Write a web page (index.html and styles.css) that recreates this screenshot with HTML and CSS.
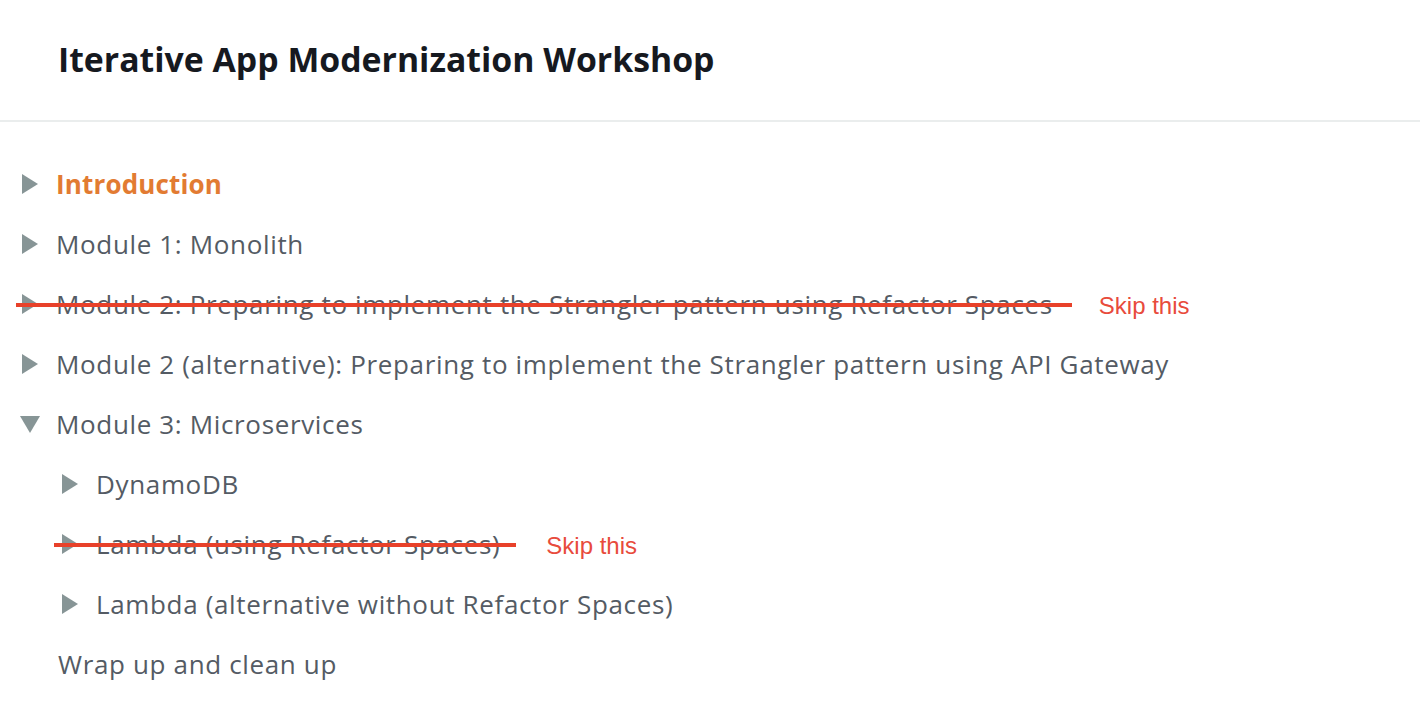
FILE: index.html
```html
<!DOCTYPE html>
<html lang="en">
<head>
<meta charset="utf-8">
<title>Iterative App Modernization Workshop</title>
<link rel="stylesheet" href="styles.css">
</head>
<body>
<header class="header">
  <h1 class="title">Iterative App Modernization Workshop</h1>
</header>
<nav class="toc">
  <ul class="list">
    <li class="row lvl1"><span class="item"><svg class="tri" width="16" height="20" viewBox="0 0 16 20"><path d="M0 0L16 10L0 20Z"/></svg><span class="label active">Introduction</span></span></li>
    <li class="row lvl1"><span class="item"><svg class="tri" width="16" height="20" viewBox="0 0 16 20"><path d="M0 0L16 10L0 20Z"/></svg><span class="label">Module 1: Monolith</span></span></li>
    <li class="row lvl1"><span class="item struck s1"><svg class="tri" width="16" height="20" viewBox="0 0 16 20"><path d="M0 0L16 10L0 20Z"/></svg><span class="label">Module 2: Preparing to implement the Strangler pattern using Refactor Spaces</span></span><span class="skip">Skip this</span></li>
    <li class="row lvl1"><span class="item"><svg class="tri" width="16" height="20" viewBox="0 0 16 20"><path d="M0 0L16 10L0 20Z"/></svg><span class="label">Module 2 (alternative): Preparing to implement the Strangler pattern using API Gateway</span></span></li>
    <li class="row lvl1"><span class="item"><svg class="tri down" width="20" height="17" viewBox="0 0 20 17"><path d="M0 0L20 0L10 17Z"/></svg><span class="label">Module 3: Microservices</span></span></li>
    <li class="row lvl2"><span class="item"><svg class="tri" width="16" height="20" viewBox="0 0 16 20"><path d="M0 0L16 10L0 20Z"/></svg><span class="label">DynamoDB</span></span></li>
    <li class="row lvl2"><span class="item struck s2"><svg class="tri" width="16" height="20" viewBox="0 0 16 20"><path d="M0 0L16 10L0 20Z"/></svg><span class="label">Lambda (using Refactor Spaces)</span></span><span class="skip">Skip this</span></li>
    <li class="row lvl2"><span class="item"><svg class="tri" width="16" height="20" viewBox="0 0 16 20"><path d="M0 0L16 10L0 20Z"/></svg><span class="label">Lambda (alternative without Refactor Spaces)</span></span></li>
    <li class="row lvl1 leaf"><span class="item"><span class="label">Wrap up and clean up</span></span></li>
  </ul>
</nav>
</body>
</html>
```

FILE: styles.css
```css
* { box-sizing: border-box; }
html, body {
  margin: 0;
  padding: 0;
  background: #ffffff;
}
body {
  font-family: "Open Sans", "Noto Sans", "Liberation Sans", sans-serif;
  color: #545b64;
}
.header {
  height: 122px;
  display: flex;
  align-items: center;
  padding-left: 58px;
  border-bottom: 2px solid #eaeded;
}
.title {
  margin: 0;
  font-size: 33.8px;
  font-weight: 700;
  color: #16191f;
  padding-bottom: 2px;
}
.toc {
  padding-top: 32px;
}
.list {
  list-style: none;
  margin: 0;
  padding: 0;
}
.row {
  height: 60px;
  display: flex;
  align-items: center;
}
.lvl1 { padding-left: 22px; }
.lvl2 { padding-left: 62px; }
.leaf { padding-left: 58px; }
.item {
  display: inline-flex;
  align-items: center;
  position: relative;
}
.tri {
  fill: #879596;
  flex: none;
  margin-right: 18px;
}
.tri.down {
  margin-left: -2px;
  margin-right: 16px;
}
.label {
  font-size: 26px;
  line-height: 30px;
  letter-spacing: 0.65px;
  white-space: nowrap;
}
.active {
  color: #e27b32;
  font-weight: 700;
  letter-spacing: 0.15px;
}
.struck::after {
  content: "";
  position: absolute;
  top: 50%;
  height: 4px;
  margin-top: -1px;
  background: #e8412a;
}
.s1::after { left: -6px; right: -19px; }
.s2::after { left: -8px; right: -16px; }
.skip {
  margin-left: 46px;
  padding-top: 4px;
  font-family: "Liberation Sans", Arial, sans-serif;
  font-size: 24px;
  color: #e84b3c;
}
```
